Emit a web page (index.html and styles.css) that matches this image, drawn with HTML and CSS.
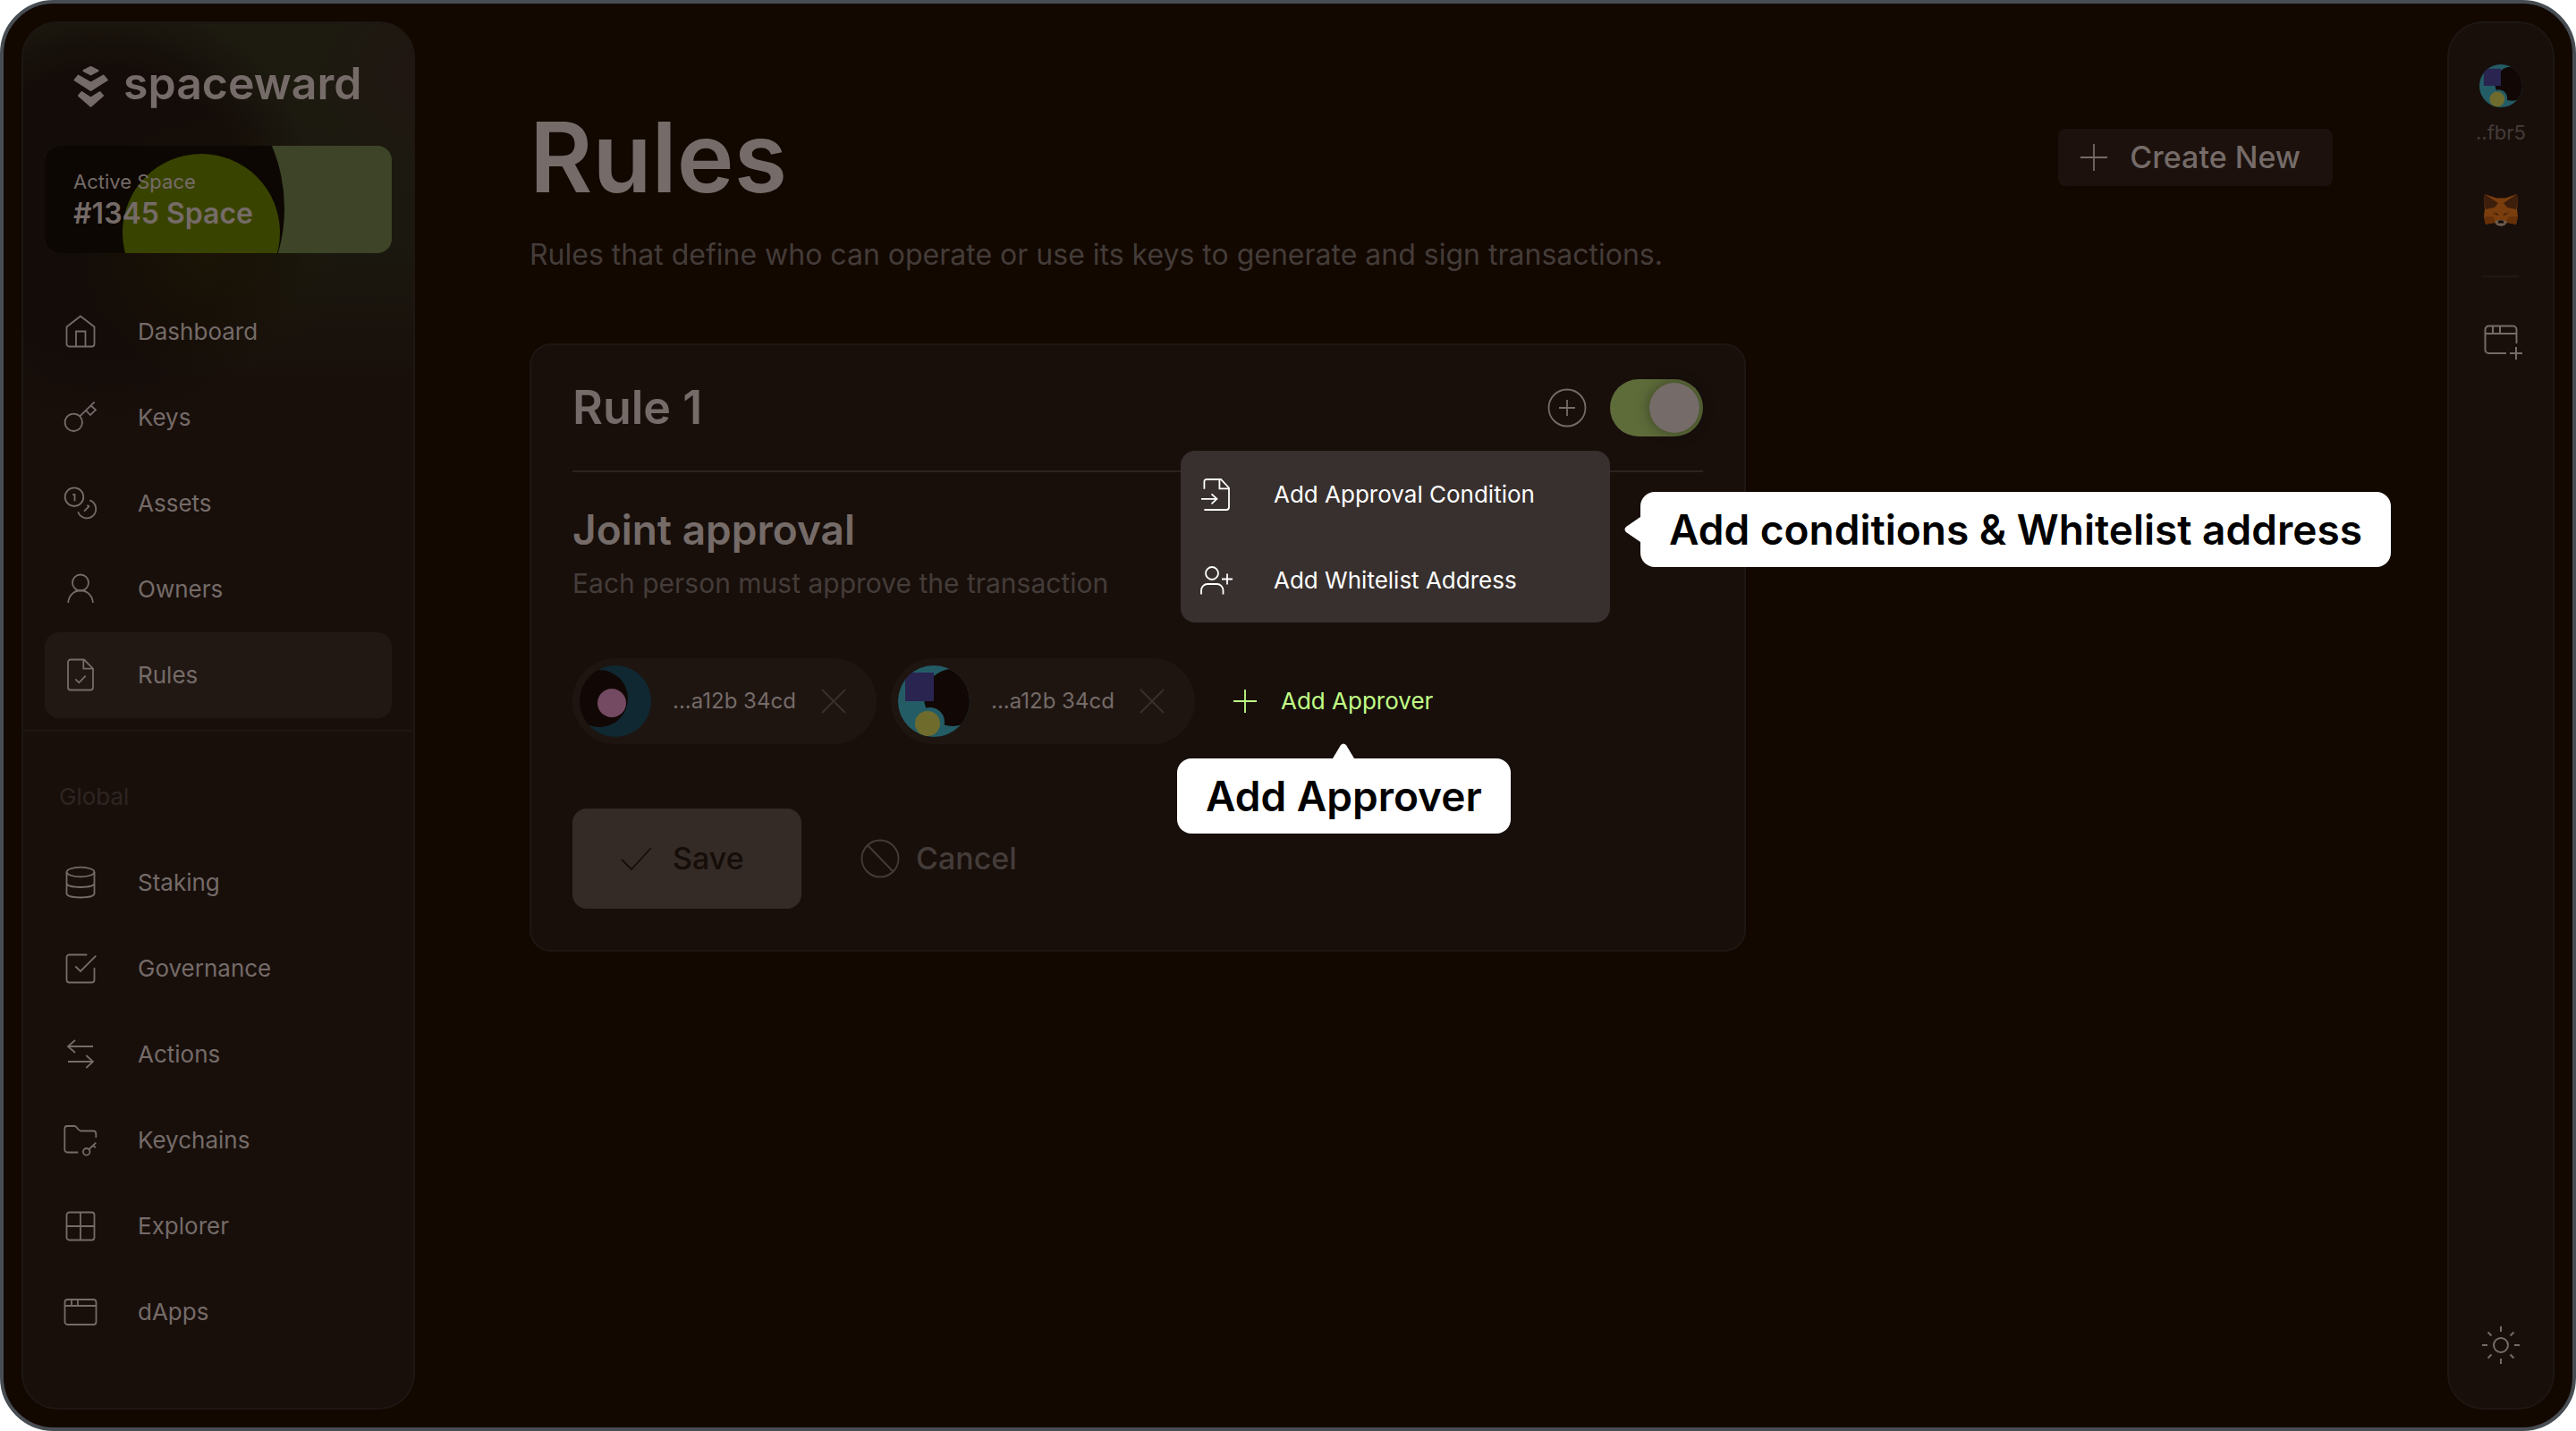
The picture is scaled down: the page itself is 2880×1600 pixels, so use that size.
FILE: index.html
```html
<!DOCTYPE html>
<html lang="en">
<head>
<meta charset="utf-8">
<meta name="viewport" content="width=device-width, initial-scale=1">
<title>SpaceWard – Rules</title>
<link rel="stylesheet" href="styles.css">
</head>
<body>
<svg class="defs" aria-hidden="true">
  <symbol id="avatar-blocks" viewBox="0 0 80 80">
    <clipPath id="disc"><circle cx="40" cy="40" r="40"/></clipPath>
    <g clip-path="url(#disc)">
      <rect width="80" height="80" fill="#245c66"/>
      <circle cx="61" cy="36" r="32" fill="#110704"/>
      <rect x="8" y="8" width="32" height="32" fill="#2a2451"/>
      <circle cx="36" cy="63" r="16" fill="#245c66"/>
      <circle cx="33" cy="65" r="14" fill="#6f6b2d"/>
    </g>
  </symbol>
</svg>
<div class="app">
  <aside class="sidebar">
    <a class="brand" href="#">
      <svg class="brand-mark" viewBox="0 0 40 48" aria-hidden="true"><path d="M19.500 3 27.500 7 19.500 11.300 11.500 7ZM5.500 12.500 19.500 20.500 33.500 12.500 37.700 17.500 19.500 29 1.500 17.500ZM9.500 31 19.500 37.500 29.500 31 33 35 19.500 46.800 6 35Z"/></svg>
      <span class="wordmark">spaceward</span>
    </a>
    <button class="space" type="button">
      <svg class="space-art" viewBox="0 0 388 120" preserveAspectRatio="xMinYMin slice" aria-hidden="true">
        <rect width="388" height="120" fill="#3d4427"/>
        <circle cx="88" cy="70" r="180" fill="#0c0702"/>
        <circle cx="175" cy="97" r="88" fill="#394300"/>
      </svg>
      <span class="space-label">Active Space</span>
      <span class="space-name">#1345 Space</span>
    </button>
    <nav class="menu">
      <a href="#"><svg class="icon" viewBox="0 0 40 40"><path d="M20 2.500 35.500 14.500V33.500a3 3 0 0 1-3 3H7.500a3 3 0 0 1-3-3V14.500ZM15 36.500V19.500H25.500V36.500"/></svg>Dashboard</a>
      <a href="#"><svg class="icon" viewBox="0 0 40 40"><circle cx="12.300" cy="25.300" r="9.700"/><path d="M19.300 18.300 35.700 2.300M31.300 6.300 37 11.300 31 17 26 11.800"/></svg>Keys</a>
      <a href="#"><svg class="icon" viewBox="0 0 40 40"><circle cx="13" cy="12.700" r="10.300"/><path d="M30.300 16.300A10.300 10.300 0 1 1 17.200 29.300M11.200 9.800h2.300v7.500M24 28.700l5.300-5.400-1.800-1.500"/></svg>Assets</a>
      <a href="#"><svg class="icon" viewBox="0 0 40 40"><circle cx="20" cy="12.500" r="9"/><path d="M6.300 35a13.700 13.700 0 0 1 27.500 0"/></svg>Owners</a>
      <a class="current" href="#" aria-current="page"><svg class="icon" viewBox="0 0 40 40"><path d="M24 2.500H9a3 3 0 0 0-3 3v28a3 3 0 0 0 3 3h22a3 3 0 0 0 3-3V12.500ZM23.300 2.500V12.700H34M14.300 24.300l4 4 7.400-7.600"/></svg>Rules</a>
    </nav>
    <nav class="menu menu-global" aria-labelledby="global">
      <h2 class="menu-title" id="global">Global</h2>
      <a href="#"><svg class="icon" viewBox="0 0 40 40"><ellipse cx="20" cy="8" rx="15.500" ry="5.300"/><path d="M4.500 8v24c0 6 31 6 31 0V8M4.500 20.500c0 6 31 6 31 0"/></svg>Staking</a>
      <a href="#"><svg class="icon" viewBox="0 0 40 40"><path d="M27.300 4.500H7.500a3 3 0 0 0-3 3v25a3 3 0 0 0 3 3h25a3 3 0 0 0 3-3V19M14.300 17.500 20 23 37.300 5.600"/></svg>Governance</a>
      <a href="#"><svg class="icon" viewBox="0 0 40 40"><path d="M34 11H6M14 4 6 11l8 7M6 28h28M26.300 21l7.700 7-7.700 7"/></svg>Actions</a>
      <a href="#"><svg class="icon" viewBox="0 0 40 40"><path d="M17.300 33.500H5.300a3 3 0 0 1-3-3V7a3 3 0 0 1 3-3h8c3 0 3.500 5.500 7 5.500h14a3 3 0 0 1 3 3V17M29.500 30l7.800-7.300M34 26l3 2"/><circle cx="26.700" cy="32.800" r="3.800"/></svg>Keychains</a>
      <a href="#"><svg class="icon" viewBox="0 0 40 40"><rect x="4.500" y="4.500" width="31" height="31" rx="3"/><path d="M20 4.500v31M4.500 20h31"/></svg>Explorer</a>
      <a href="#"><svg class="icon" viewBox="0 0 40 40"><rect x="2.500" y="6" width="35" height="28" rx="3"/><path d="M2.500 13h35M10 6v7M17 6v7"/></svg>dApps</a>
    </nav>
  </aside>

  <main class="main">
    <header class="page-head">
      <h1 class="page-title">Rules</h1>
      <button class="create" type="button"><svg class="icon icon-plus" viewBox="0 0 32 32"><path d="M16 1v30M1 16h30"/></svg>Create New</button>
    </header>
    <p class="page-intro">Rules that define who can operate or use its keys to generate and sign transactions.</p>

    <section class="rule">
      <div class="rule-head">
        <h2 class="rule-title">Rule 1</h2>
        <button class="rule-add" type="button" aria-label="Add to rule"><svg class="icon icon-round" viewBox="0 0 44 44"><circle cx="22" cy="22" r="20.500"/><path d="M22 13v18M13 22h18"/></svg></button>
        <input class="toggle" type="checkbox" role="switch" aria-label="Rule enabled" checked>
        <div class="popup">
          <button type="button"><svg class="icon" viewBox="0 0 40 40"><path d="M6.400 13.700V5.500a2.500 2.500 0 0 1 2.500-2.500H25l9 9.500V34a3 3 0 0 1-3 3H6.400M23.400 3v10.300H34M3 24.800h17.500M14.500 19.300l6 5.500-6 5.500"/></svg>Add Approval Condition</button>
          <button type="button"><svg class="icon" viewBox="0 0 40 40"><circle cx="15" cy="12" r="7"/><path d="M3 35.500V31a7 7 0 0 1 7-7h10.500a7 7 0 0 1 7 7v4.500M32 12.500v12M26 18.500h12"/></svg>Add Whitelist Address</button>
          <div class="tip tip-right" role="tooltip">Add conditions &amp; Whitelist address<svg class="tip-arrow" viewBox="0 0 18 28"><path d="M18 0 2 11Q-1 14 2 17L18 28Z"/></svg></div>
        </div>
      </div>
      <h3 class="rule-kind">Joint approval</h3>
      <p class="rule-note">Each person must approve the transaction</p>
      <div class="approvers">
        <div class="chip">
          <svg class="avatar" viewBox="0 0 80 80" aria-hidden="true"><g clip-path="url(#disc)"><rect width="80" height="80" fill="#102831"/><circle cx="22" cy="37" r="32" fill="#110704"/><circle cx="36" cy="42" r="16" fill="#734a62"/></g></svg>
          <span class="chip-text">...a12b 34cd</span>
          <button type="button" aria-label="Remove approver"><svg class="icon icon-close" viewBox="0 0 32 32"><path d="M3 3l26 26M29 3 3 29"/></svg></button>
        </div>
        <div class="chip">
          <svg class="avatar" aria-hidden="true"><use href="#avatar-blocks"/></svg>
          <span class="chip-text">...a12b 34cd</span>
          <button type="button" aria-label="Remove approver"><svg class="icon icon-close" viewBox="0 0 32 32"><path d="M3 3l26 26M29 3 3 29"/></svg></button>
        </div>
        <div class="add-wrap">
          <button class="add-approver" type="button"><svg class="icon icon-plus" viewBox="0 0 32 32"><path d="M16 3v26M3 16h26"/></svg>Add Approver</button>
          <div class="tip tip-below" role="tooltip">Add Approver<svg class="tip-arrow" viewBox="0 0 24 17"><path d="M0 17 9 2Q12-1 15 2L24 17Z"/></svg></div>
        </div>
      </div>
      <div class="actions">
        <button class="save" type="button"><svg class="icon" viewBox="0 0 40 40"><path d="M3 21l11 11L36 8"/></svg>Save</button>
        <button class="cancel" type="button"><svg class="icon icon-round" viewBox="0 0 44 44"><circle cx="22" cy="22" r="20.500"/><path d="M8 7l28 29"/></svg>Cancel</button>
      </div>
    </section>
  </main>

  <aside class="rail">
    <svg class="rail-avatar" aria-hidden="true"><use href="#avatar-blocks"/></svg>
    <span class="rail-name">..fbr5</span>
    <button class="rail-fox" type="button" aria-label="MetaMask">
      <svg viewBox="0 0 38 36" aria-hidden="true">
        <path fill="#7a3e0e" d="M1 0 14 4.500h10L37 0l1 8-1 9 1 8-2 9-10-2-3 3h-8l-3-3-10 2-2-9 1-8-1-9Z"/>
        <path fill="#3d1e0c" d="M1 0 16 10 12 15 2 17 0 8ZM37 0 22 10l4 5 10 2 2-9Z"/>
        <path fill="#663009" d="M0 25h10l3 6L2 34ZM38 25H28l-3 6 11 3ZM10 20l5 1 2 3-6-1ZM28 20l-5 1-2 3 6-1Z"/>
        <path fill="#2b1a10" d="M12 21.500l4 1v1.500ZM26 21.500l-4 1v1.500Z"/>
        <path fill="#6b5b50" d="M12 31l4-2h6l4 2-3 4-4 1-4-1Z"/>
        <path fill="#140b08" d="M16.500 29.500h5l1 3h-7Z"/>
      </svg>
    </button>
    <hr class="rail-line">
    <button class="rail-btn" type="button" aria-label="Add app"><svg class="icon" viewBox="0 0 48 48"><path d="M30 35H10.500a4 4 0 0 1-4-4V8.500a4 4 0 0 1 4-4h27a4 4 0 0 1 4 4V24M6.500 13h35M15 4.500V13M23 4.500V13M41 28v14M34 35h14"/></svg></button>
    <button class="rail-btn rail-theme" type="button" aria-label="Switch theme"><svg class="icon" viewBox="0 0 48 48"><circle cx="24" cy="24" r="8"/><path d="M24 3v6M24 39v6M3 24h6M39 24h6M9.500 9.500l4 4M34.500 34.500l4 4M38.500 9.500l-4 4M13.500 34.500l-4 4"/></svg></button>
  </aside>
</div>
</body>
</html>
```
FILE: styles.css
```css
:root {
  --page: #120800;
  --panel: #180f0b;
  --line: #1e1612;
  --text: #756b68;
  --dim: #443c39;
}

* { box-sizing: border-box; }

body {
  margin: 0;
  background: #fff;
  color: var(--text);
  font: 400 26px/32px Inter, sans-serif;
}

h1, h2, h3, p { margin: 0; font-weight: 600; }

button {
  padding: 0;
  border: 0;
  background: none;
  color: inherit;
  font: inherit;
  text-align: left;
}

a { color: inherit; text-decoration: none; }

.defs { position: absolute; width: 0; height: 0; }

.icon {
  display: block;
  flex: none;
  width: 40px;
  height: 40px;
  fill: none;
  stroke: currentColor;
  stroke-width: 1.8;
}

.icon-plus, .icon-close { width: 32px; height: 32px; }
.icon-round { width: 44px; height: 44px; }

.app {
  display: flex;
  min-height: 100vh;
  padding: 20px;
  border: 4px solid #474d52;
  border-radius: 60px;
  background: var(--page);
}

/* Sidebar */
.sidebar, .rail {
  flex: none;
  border: 2px solid var(--line);
  border-radius: 40px;
  background: var(--panel);
}

.sidebar {
  width: 440px;
  background:
    radial-gradient(circle at 210px 250px, #1f1a0490 0, #1f1a0400 150px),
    radial-gradient(circle at 90px 210px, #140c08 0, #140c08 160px, #140c0800 240px),
    radial-gradient(circle at 440px 60px, #201612 0, #20161200 110px),
    linear-gradient(#1d1a10 0, #1b190f 230px, #180f0b00 400px),
    var(--panel);
}

.brand {
  display: flex;
  gap: 16px;
  padding: 46px 56px 0;
}

.brand-mark {
  width: 40px;
  height: 48px;
  fill: var(--text);
  stroke: var(--text);
  stroke-width: 2;
  stroke-linejoin: round;
}

.wordmark { font-size: 50px; font-weight: 600; line-height: 42px; }

.space {
  display: flex;
  flex-direction: column;
  gap: 4px;
  position: relative;
  width: calc(100% - 48px);
  height: 120px;
  margin: 43px 24px 0;
  padding: 24px 32px;
  border-radius: 16px;
  overflow: hidden;
}

.space-art { position: absolute; inset: 0; width: 100%; height: 100%; }
.space-label, .space-name { position: relative; }
.space-label { font-size: 22px; }
.space-name { font-size: 32px; font-weight: 600; }

.menu { padding: 40px 24px 13px; }

.menu a {
  display: flex;
  align-items: center;
  gap: 44px;
  height: 96px;
  padding: 0 20px;
  border-radius: 16px;
}

.menu .current { background: #211814; }

.menu-global {
  padding-top: 57px;
  border-top: 2px solid var(--line);
}

.menu-title {
  padding: 0 16px 32px;
  color: #2e2522;
  font-size: 26px;
  font-weight: 400;
}

/* Main column */
.main { flex: 1; padding: 104px 128px 0; }

.page-head {
  display: flex;
  align-items: center;
  justify-content: space-between;
}

.page-title { font-size: 108px; line-height: 96px; }

.create {
  display: flex;
  align-items: center;
  gap: 24px;
  height: 64px;
  padding: 0 36px 0 24px;
  border-radius: 8px;
  background: #1c110d;
  font-size: 34px;
  font-weight: 500;
}

.page-intro {
  margin: 41px 0 79px;
  color: var(--dim);
  font-size: 32px;
  font-weight: 400;
  line-height: 40px;
}

/* Rule card */
.rule {
  max-width: 1360px;
  padding: 0 46px 46px;
  border: 2px solid var(--line);
  border-radius: 24px;
  background: var(--panel);
}

.rule-head {
  display: flex;
  align-items: center;
  position: relative;
  height: 142px;
  border-bottom: 2px solid #2d2421;
}

.rule-title { flex: 1; font-size: 52px; line-height: 56px; }
.rule-add { margin-right: 26px; }

.toggle {
  appearance: none;
  width: 104px;
  height: 64px;
  margin: 0;
  padding: 4px;
  border-radius: 32px;
  background: #5e6c3a;
}

.toggle::before {
  content: "";
  display: block;
  width: 56px;
  height: 56px;
  margin-left: auto;
  border-radius: 50%;
  background: var(--text);
  box-shadow: 0 0 16px #0006;
}

.popup {
  position: absolute;
  z-index: 1;
  top: 118px;
  right: 104px;
  width: 480px;
  border-radius: 16px;
  background: #38302e;
  color: #fff;
}

.popup button {
  display: flex;
  align-items: center;
  gap: 44px;
  width: 100%;
  height: 96px;
  padding: 2px 20px 0;
}

.tip {
  position: absolute;
  padding: 18px 32px;
  border-radius: 16px;
  background: #fff;
  color: #000;
  font-size: 46px;
  font-weight: 600;
  line-height: 48px;
  white-space: nowrap;
}

.tip-arrow { position: absolute; fill: #fff; }
.tip-right { top: 46px; left: calc(100% + 34px); }
.tip-right .tip-arrow { top: 28px; right: 100%; width: 18px; height: 28px; }
.tip-below { top: calc(100% + 16px); left: -36px; }
.tip-below .tip-arrow { bottom: 100%; left: calc(50% - 12px); width: 24px; height: 17px; }

.rule-kind { margin-top: 40px; font-size: 46px; line-height: 48px; }

.rule-note {
  margin: 16px 0 64px;
  color: var(--dim);
  font-size: 30px;
  font-weight: 400;
  line-height: 40px;
}

.approvers { display: flex; gap: 16px; }

.chip {
  display: flex;
  align-items: center;
  width: 340px;
  height: 96px;
  padding: 8px 32px 8px 8px;
  border-radius: 48px;
  background: #1e1511;
}

.avatar { width: 80px; height: 80px; }
.chip-text { flex: 1; padding-left: 24px; font-size: 24px; }
.chip button { color: #3a312e; }

.add-wrap { position: relative; }

.add-approver {
  display: flex;
  align-items: center;
  gap: 24px;
  height: 96px;
  padding: 0 24px;
  color: #c0ff86;
}

.actions { display: flex; gap: 66px; margin-top: 72px; }

.save, .cancel {
  display: flex;
  align-items: center;
  height: 112px;
  font-size: 34px;
  font-weight: 500;
}

.save {
  gap: 20px;
  width: 256px;
  padding: 0 52px;
  border-radius: 16px;
  background: #342b27;
  color: #150d09;
}

.cancel { gap: 18px; color: var(--dim); }

/* Right rail */
.rail {
  display: flex;
  flex-direction: column;
  align-items: center;
  width: 120px;
  padding: 46px 0;
}

.rail-avatar { width: 48px; height: 48px; }
.rail-name { margin-top: 12px; color: var(--dim); font-size: 22px; }
.rail-fox { margin-top: 53px; }
.rail-fox svg { display: block; width: 38px; height: 36px; }

.rail-line {
  width: 40px;
  height: 2px;
  margin: 55px 0 50px;
  border: 0;
  background: #201814;
}

.rail-btn .icon { width: 48px; height: 48px; stroke-width: 2; }
.rail-theme { margin-top: auto; }
```
